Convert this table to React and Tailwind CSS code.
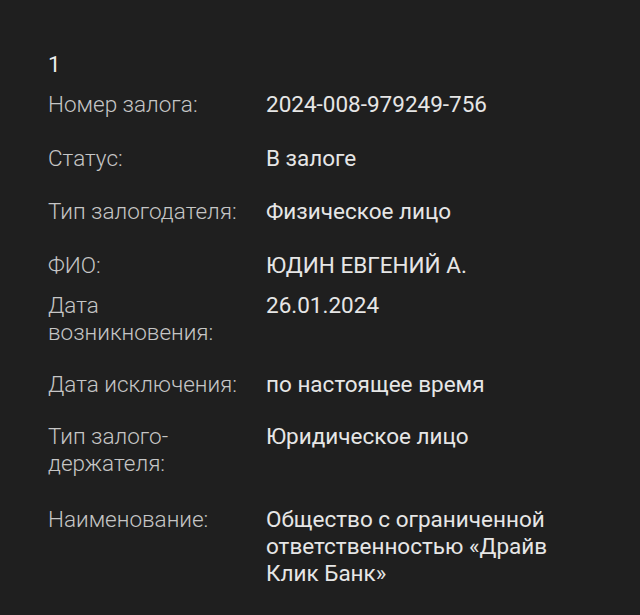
const rows = [
  { label: ['Номер залога:'], value: ['2024-008-979249-756'], gap: 'mt-0' },
  { label: ['Статус:'], value: ['В залоге'], gap: 'mt-[27px]' },
  { label: ['Тип залогодателя:'], value: ['Физическое лицо'], gap: 'mt-[26px]' },
  { label: ['ФИО:'], value: ['ЮДИН ЕВГЕНИЙ А.'], gap: 'mt-[27px]' },
  { label: ['Дата', 'возникновения:'], value: ['26.01.2024'], gap: 'mt-[13px]' },
  { label: ['Дата исключения:'], value: ['по настоящее время'], gap: 'mt-[25px]' },
  { label: ['Тип залого-', 'держателя:'], value: ['Юридическое лицо'], gap: 'mt-[25px]' },
  {
    label: ['Наименование:'],
    value: ['Общество с ограниченной', 'ответственностью «Драйв', 'Клик Банк»'],
    gap: 'mt-[29px]',
  },
];

export default function App() {
  return (
    <div className="min-h-[615px] w-[640px] bg-[#1f1f1f] pl-12 pt-[51px] font-['Roboto',sans-serif] text-[22.5px] leading-[27px]">
      <div className="mb-[13px] text-[#ececec]">1</div>
      <div className="flex flex-col">
        {rows.map((row, i) => (
          <div key={i} className={`flex ${row.gap}`}>
            <div className="w-[218px] shrink-0 font-light text-[#c6c6c6]">
              {row.label.map((line, j) => (
                <div key={j}>{line}</div>
              ))}
            </div>
            <div className="text-[#e6e6e6]">
              {row.value.map((line, j) => (
                <div key={j}>{line}</div>
              ))}
            </div>
          </div>
        ))}
      </div>
    </div>
  );
}
